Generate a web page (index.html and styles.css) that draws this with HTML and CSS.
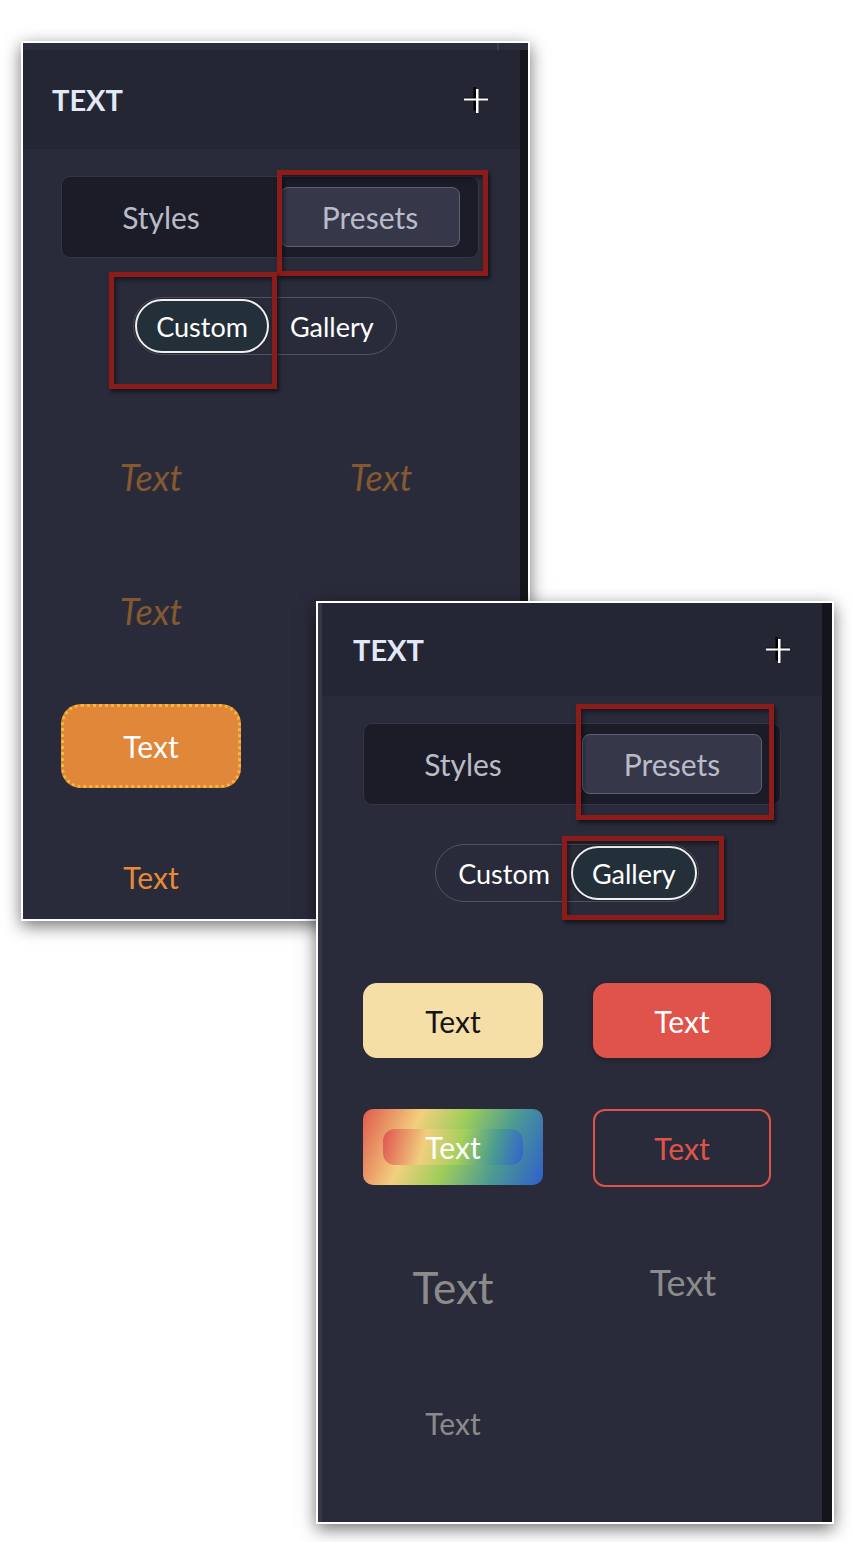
FILE: index.html
```html
<!DOCTYPE html>
<html>
<head>
    <title>Text Presets</title>
    <link rel="stylesheet" href="styles.css">
</head>
<body>
    <div class="canvas">

        <!-- Presets / Custom -->
        <section class="panel panel-custom">
            <div class="tab-strip"><span class="tab"></span></div>
            <div class="panel-row">
                <div class="panel-main">
                    <header class="panel-head">
                        <h2>TEXT</h2>
                        <svg class="cursor" width="24" height="26" viewBox="0 0 24 26">
                            <path d="M10.75 0v23.5" stroke="#000" stroke-width="2.5" />
                            <path d="M0 11h24" stroke="#000" stroke-width="1" opacity="0.7" />
                            <path d="M0 12.5h24" stroke="#fff" stroke-width="2" />
                            <path d="M13.25 2v24" stroke="#fff" stroke-width="2.5" />
                        </svg>
                    </header>
                    <div class="panel-body">
                        <div class="segmented">
                            <button class="seg-btn">Styles</button>
                            <button class="seg-btn active">Presets</button>
                        </div>
                        <div class="toggle-row">
                            <div class="toggle">
                                <button class="toggle-btn active">Custom</button>
                                <button class="toggle-btn">Gallery</button>
                            </div>
                        </div>
                        <div class="preset-grid custom-grid">
                            <div class="preset italic-brown">Text</div>
                            <div class="preset italic-brown">Text</div>
                            <div class="preset italic-brown">Text</div>
                            <div class="preset dotted-btn">Text</div>
                            <div class="preset orange-text">Text</div>
                        </div>
                    </div>
                </div>
                <div class="scroll-track"></div>
            </div>
            <span class="mark mark-presets-a"></span>
            <span class="mark mark-custom"></span>
        </section>

        <!-- Presets / Gallery -->
        <section class="panel panel-gallery">
            <div class="panel-row">
                <div class="panel-main">
                    <header class="panel-head">
                        <h2>TEXT</h2>
                        <svg class="cursor" width="24" height="26" viewBox="0 0 24 26">
                            <path d="M10.75 0v23.5" stroke="#000" stroke-width="2.5" />
                            <path d="M0 11h24" stroke="#000" stroke-width="1" opacity="0.7" />
                            <path d="M0 12.5h24" stroke="#fff" stroke-width="2" />
                            <path d="M13.25 2v24" stroke="#fff" stroke-width="2.5" />
                        </svg>
                    </header>
                    <div class="panel-body">
                        <div class="segmented">
                            <button class="seg-btn">Styles</button>
                            <button class="seg-btn active">Presets</button>
                        </div>
                        <div class="toggle-row">
                            <div class="toggle">
                                <button class="toggle-btn">Custom</button>
                                <button class="toggle-btn active">Gallery</button>
                            </div>
                        </div>
                        <div class="preset-grid gallery-grid">
                            <div class="preset box box-cream">Text</div>
                            <div class="preset box box-red">Text</div>
                            <div class="preset box box-rainbow"><span class="rainbow-chip">Text</span></div>
                            <div class="preset box box-outline">Text</div>
                            <div class="preset grey-lg">Text</div>
                            <div class="preset grey-md">Text</div>
                            <div class="preset grey-sm">Text</div>
                        </div>
                    </div>
                </div>
                <div class="scroll-track"></div>
            </div>
            <span class="mark mark-presets-b"></span>
            <span class="mark mark-gallery"></span>
        </section>

    </div>
</body>
</html>
```

FILE: styles.css
```css
* {
    box-sizing: border-box;
}

body {
    margin: 0;
    background: #fff;
    font-family: Lato, "Liberation Sans", sans-serif;
}

.canvas {
    position: relative;
    width: 852px;
    height: 1542px;
    overflow: hidden;
}

/* Panels (two screenshots on a sheet) */
.panel {
    position: absolute;
    display: flex;
    flex-direction: column;
    border: 2px solid #fff;
    background: #2a2b3a;
    box-shadow: 0 5px 16px rgba(0,0,0,0.55);
    overflow: hidden;
}

.panel-custom {
    left: 21px;
    top: 41px;
    width: 509px;
    height: 880px;
}

.panel-gallery {
    left: 316px;
    top: 601px;
    width: 518px;
    height: 923px;
}

.tab-strip {
    display: flex;
    flex: none;
    height: 7px;
    background: #2a2d3c;
}

.tab {
    width: 476px;
    border-right: 2px solid #3c3f4f;
}

.panel-row {
    flex: 1;
    display: flex;
    min-height: 0;
}

.panel-gallery .panel-row {
    border-left: 4px solid #343847;
}

.panel-main {
    flex: 1;
    min-width: 0;
}

.scroll-track {
    flex: none;
    width: 8px;
    background: #14151b;
}

.panel-gallery .scroll-track {
    width: 10px;
}

.panel-head {
    display: flex;
    align-items: center;
    justify-content: space-between;
    height: 99px;
    padding: 0 32px 0 29px;
    background: #242634;
}

.panel-gallery .panel-head {
    height: 93px;
    padding-left: 31px;
}

.panel-head h2 {
    margin: 0;
    font-size: 29px;
    font-weight: 700;
    color: #e1e8f6;
}

.cursor {
    display: block;
}

.panel-body {
    padding: 27px 0 0 38px;
}

.panel-gallery .panel-body {
    padding-left: 41px;
}

/* Styles / Presets switch */
.segmented {
    display: grid;
    grid-template-columns: 180px 180px;
    column-gap: 29px;
    width: 418px;
    height: 82px;
    padding: 10px 9px;
    border: 1px solid #343646;
    border-radius: 9px;
    background: #1b1c28;
}

.seg-btn {
    font: inherit;
    font-size: 30px;
    color: #b9bcc8;
    background: none;
    border: 1.5px solid transparent;
    border-radius: 8px;
    padding: 0;
}

.seg-btn.active {
    background: #363748;
    border-color: #5a6279;
}

/* Custom / Gallery pill */
.toggle-row {
    display: flex;
    justify-content: center;
    width: 418px;
    padding-right: 10px;
    margin-top: 39px;
}

.toggle {
    display: flex;
    padding: 1px;
    border: 1.5px solid #50535d;
    border-radius: 30px;
}

.toggle-btn {
    font: inherit;
    font-size: 27px;
    color: #fff;
    height: 54px;
    padding: 0 19px;
    background: none;
    border: 2px solid transparent;
    border-radius: 28px;
}

.toggle-btn.active {
    background: #243039;
    border-color: #eef0f2;
    box-shadow: 0 0 3px rgba(0,0,0,0.5);
}

/* Preset grid */
.preset-grid {
    display: grid;
    grid-template-columns: 180px 180px;
    column-gap: 50px;
    align-items: start;
    justify-items: center;
}

.custom-grid {
    margin-top: 101px;
    grid-template-rows: 134px 114px 155px auto;
}

.custom-grid .dotted-btn,
.custom-grid .orange-text {
    grid-column: 1;
}

.gallery-grid {
    margin-top: 81px;
    grid-template-rows: 126px 152px 144px auto;
}

.preset {
    line-height: 1.2;
}

.italic-brown {
    font-size: 36px;
    font-style: italic;
    color: #85582f;
}

.dotted-btn {
    display: flex;
    align-items: center;
    justify-content: center;
    width: 180px;
    height: 84px;
    border: 3px dotted #f4b63c;
    border-radius: 20px;
    background: #e0873a;
    color: #fff;
    font-size: 30px;
}

.orange-text {
    font-size: 30px;
    color: #e88a36;
}

.box {
    display: flex;
    align-items: center;
    justify-content: center;
    width: 180px;
    height: 75px;
    border-radius: 14px;
    font-size: 30px;
}

.box-cream {
    background: #f6dfa7;
    color: #141414;
}

.box-red {
    justify-self: start;
    width: 178px;
    background: #e0534b;
    color: #fff;
    box-shadow: 0 2px 6px rgba(0,0,0,0.25);
}

.box-rainbow {
    height: 76px;
    border-radius: 10px;
    background: linear-gradient(113deg, #e05a4e 0%, #f2cf7e 28%, #9ecd5b 50%, #4c9a92 74%, #2f5fcc 100%);
}

.rainbow-chip {
    display: flex;
    align-items: center;
    justify-content: center;
    width: 140px;
    height: 36px;
    border-radius: 12px;
    background: linear-gradient(105deg, #e0524f 0%, #f0cf7e 30%, #a3cf5a 55%, #4a9b92 78%, #3262cf 100%);
    color: #fff;
    font-size: 30px;
}

.box-outline {
    justify-self: start;
    width: 178px;
    height: 78px;
    border: 2px solid #e0534b;
    border-radius: 12px;
    color: #e0534b;
}

.grey-lg {
    font-size: 44px;
    color: #8b8b8b;
}

.grey-md {
    font-size: 36px;
    color: #8b8b8b;
}

.grey-sm {
    font-size: 30px;
    color: #8b8b8b;
}

/* Red annotation frames */
.mark {
    position: absolute;
    border: 5px solid #8c1c19;
    box-shadow: 2px 3px 4px rgba(0,0,0,0.55), inset 2px 3px 4px rgba(0,0,0,0.45);
}

.mark-presets-a { left: 254px; top: 127px; width: 211px; height: 106px; }
.mark-custom    { left: 86px;  top: 229px; width: 168px; height: 117px; }
.mark-presets-b { left: 258px; top: 101px; width: 198px; height: 116px; }
.mark-gallery   { left: 244px; top: 233px; width: 162px; height: 84px; }
```
